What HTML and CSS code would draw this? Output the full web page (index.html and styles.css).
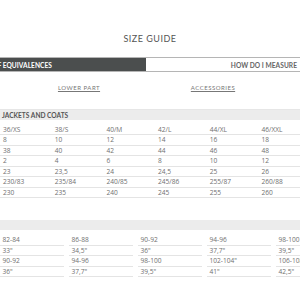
FILE: index.html
```html
<!DOCTYPE html>
<html>
<head>
<meta charset="utf-8">
<link rel="stylesheet" href="styles.css">
</head>
<body>
<div class="page">
  <h1 class="title">SIZE GUIDE</h1>
  <div class="tabs">
    <div class="tab tab-active"><span class="tab-label-clip"><span class="tab-label">TABLE OF EQUIVALENCES</span></span></div>
    <div class="tab tab-other"><span class="tab-label">HOW DO I MEASURE</span></div>
  </div>
  <div class="links">
    <a class="link link-hidden">UPPER PART</a>
    <a class="link">LOWER PART</a>
    <a class="link">ACCESSORIES</a>
  </div>
  <div class="section-head">JACKETS AND COATS</div>
  <div class="grid grid-six">
    <span>36/XS</span><span>38/S</span><span>40/M</span><span>42/L</span><span>44/XL</span><span>46/XXL</span>
    <span>8</span><span>10</span><span>12</span><span>14</span><span>16</span><span>18</span>
    <span>38</span><span>40</span><span>42</span><span>44</span><span>46</span><span>48</span>
    <span>2</span><span>4</span><span>6</span><span>8</span><span>10</span><span>12</span>
    <span>23</span><span>23,5</span><span>24</span><span>24,5</span><span>25</span><span>26</span>
    <span>230/83</span><span>235/84</span><span>240/85</span><span>245/86</span><span>255/87</span><span>260/88</span>
    <span>230</span><span>235</span><span>240</span><span>245</span><span>255</span><span>260</span>
  </div>
  <div class="section-head section-head-2"></div>
  <div class="grid grid-five">
    <span>82-84</span><span>86-88</span><span>90-92</span><span>94-96</span><span>98-100</span>
    <span>33"</span><span>34,5"</span><span>36"</span><span>37,7"</span><span>39,5"</span>
    <span>90-92</span><span>94-96</span><span>98-100</span><span>102-104"</span><span>106-108</span>
    <span>36"</span><span>37,7"</span><span>39,5"</span><span>41"</span><span>42,5"</span>
  </div>
</div>
</body>
</html>
```
FILE: styles.css
```css
html, body {
  margin: 0;
  padding: 0;
  background: #fff;
}
.page {
  width: 300px;
  height: 300px;
  overflow: hidden;
  font-family: "Open Sans", "Liberation Sans", sans-serif;
  color: #6f6f6f;
}
.title {
  margin: 33px 0 0 0;
  height: 12px;
  line-height: 12px;
  font-family: Lato, "Liberation Sans", sans-serif;
  font-weight: 400;
  font-size: 9px;
  letter-spacing: 0.5px;
  text-align: center;
  color: #555;
}
.tabs {
  margin-top: 12px;
  display: flex;
  height: 13px;
  border-top: 1px solid #b5b5b5;
  border-bottom: 1px solid #b5b5b5;
  font-family: Lato, "Liberation Sans", sans-serif;
  font-size: 6.6px;
  font-weight: 700;
  letter-spacing: 0.05px;
}
.tab {
  display: flex;
  align-items: center;
  white-space: nowrap;
}
.tab-active {
  width: 146px;
  background: #4b4e4e;
  color: #fff;
}
.tab-label-clip {
  width: 52px;
  display: flex;
  justify-content: flex-end;
}
.tab-label {
  flex-shrink: 0;
}
.tab-other {
  flex: 1;
  justify-content: flex-end;
  padding-right: 3px;
  color: #666;
  background: #fff;
}
.links {
  display: flex;
  margin-left: -122px;
  padding: 11px 0 16px 0;
  border-bottom: 1px solid #e6e6e6;
  font-family: Lato, "Liberation Sans", sans-serif;
  font-size: 6px;
  letter-spacing: 0.5px;
  line-height: 10px;
}
.link {
  width: 134px;
  flex-shrink: 0;
  text-align: center;
  color: #777;
  text-decoration: underline;
}
.section-head {
  height: 10px;
  line-height: 10px;
  background: #ececec;
  padding-left: 2px;
  font-family: Lato, "Liberation Sans", sans-serif;
  font-size: 6.6px;
  font-weight: 700;
  letter-spacing: 0;
  color: #555;
}
.section-head-2 {
  margin-top: 22px;
}
.grid {
  display: grid;
  margin-top: 4.5px;
  font-size: 6.6px;
  white-space: nowrap;
}
.grid span {
  height: 9.5px;
  line-height: 9.5px;
  border-bottom: 1px solid #e4e4e4;
  padding-left: 3px;
}
.grid-six {
  grid-template-columns: repeat(6, 51.7px);
}
.grid-five {
  grid-template-columns: repeat(5, 64px);
  column-gap: 5px;
  margin-top: 5px;
}
.grid-five span {
  padding-left: 2.5px;
}
```
